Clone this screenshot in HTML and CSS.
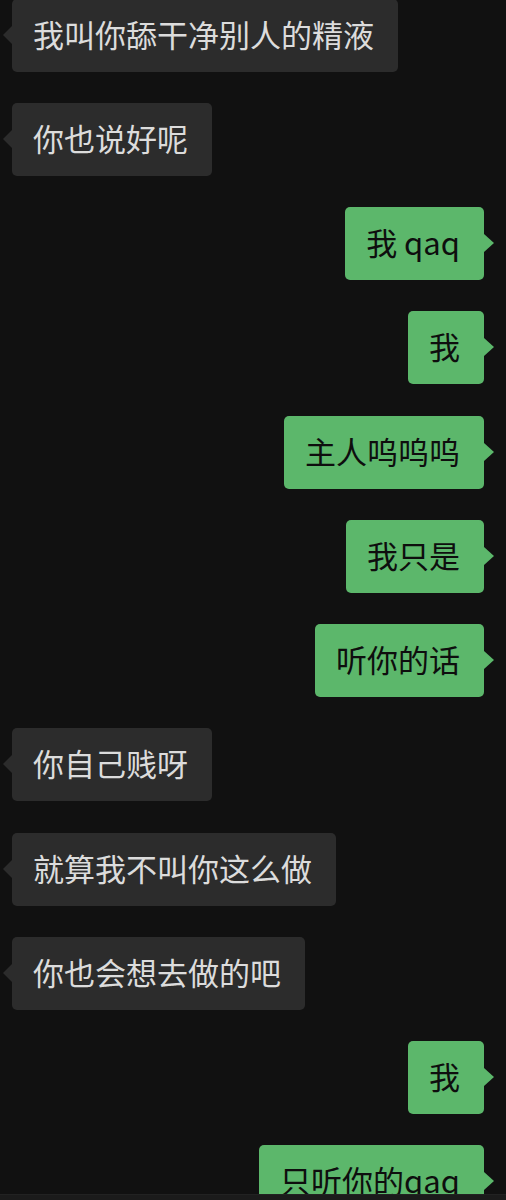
FILE: index.html
```html
<!DOCTYPE html>
<html lang="zh-CN">
  <head>
    <meta charset="UTF-8" />
    <meta name="viewport" content="width=device-width, initial-scale=1.0" />
    <title>聊天</title>
    <link rel="stylesheet" href="styles.css">
  </head>
  <body>
    <div class="chat">
      <div class="bubble left first">我叫你舔干净别人的精液</div>
      <div class="bubble left">你也说好呢</div>
      <div class="bubble right">我 qaq</div>
      <div class="bubble right">我</div>
      <div class="bubble right">主人呜呜呜</div>
      <div class="bubble right">我只是</div>
      <div class="bubble right">听你的话</div>
      <div class="bubble left">你自己贱呀</div>
      <div class="bubble left">就算我不叫你这么做</div>
      <div class="bubble left">你也会想去做的吧</div>
      <div class="bubble right">我</div>
      <div class="bubble right">只听你的qaq</div>
    </div>
    <div class="bottom-bar"></div>
  </body>
</html>
```

FILE: styles.css
```css
body {
  margin: 0;
  height: 1200px;
  overflow: hidden;
  background-color: #111111;
  font-family: "Noto Sans CJK SC", "Noto Sans", sans-serif;
  display: flex;
  flex-direction: column;
}
.chat {
  height: 1195px;
  overflow: hidden;
  display: flex;
  flex-direction: column;
  gap: 31.25px;
  padding: 0 22px 0 12px;
  box-sizing: border-box;
}
.bubble {
  position: relative;
  flex-shrink: 0;
  height: 73px;
  line-height: 69px;
  padding: 0 24px 4px 21px;
  box-sizing: border-box;
  border-radius: 5px;
  font-size: 31px;
  white-space: nowrap;
}
.bubble.first {
  margin-top: -1.5px;
}
.bubble::before {
  content: "";
  position: absolute;
  top: 27px;
  border-top: 9px solid transparent;
  border-bottom: 9px solid transparent;
}
.left {
  align-self: flex-start;
  background-color: #2c2c2c;
  color: #dcdcdc;
}
.left::before {
  left: -9px;
  border-right: 9px solid #2c2c2c;
}
.right {
  align-self: flex-end;
  background-color: #5cb76b;
  color: #0e0e0e;
}
.right::before {
  right: -10px;
  border-left: 10px solid #5cb76b;
}
.bottom-bar {
  height: 5px;
  background-color: #1b1b1b;
  border-top: 1px solid #222222;
}
```
